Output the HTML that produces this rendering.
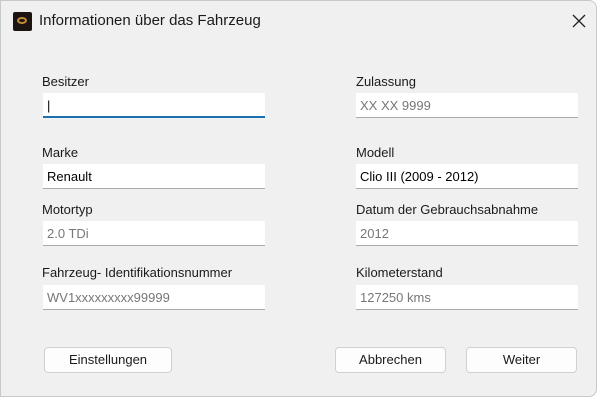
<!DOCTYPE html>
<html><head><style>
body{margin:0;width:600px;height:400px;background:#fff;overflow:hidden;font-family:"Liberation Sans",sans-serif;}
.win{position:absolute;left:0;top:0;width:597px;height:397px;background:#f0f0f0;border:1px solid #c8c8c8;border-radius:0 8px 8px 0;box-sizing:border-box;}
.t{position:absolute;left:38px;top:11px;font-size:15px;color:#1a1a1a;}
.ic{position:absolute;left:12px;top:11px;width:19px;height:19px;background:#1b1410;border-radius:2px;}
.ic:after{content:"";position:absolute;left:4px;top:5px;width:10px;height:7px;border:2px solid #c08a3a;border-radius:50%;box-sizing:border-box;}
.l{position:absolute;font-size:13px;color:#1a1a1a;}
.f{position:absolute;height:25px;background:#fff;border-bottom:1px solid #aaa;box-sizing:border-box;font-size:13px;color:#777;padding:5px 0 0 4px;}
.b{position:absolute;height:26px;background:#fdfdfd;border:1px solid #d0d0d0;border-radius:4px;box-sizing:border-box;font-size:13px;color:#1a1a1a;text-align:center;line-height:24px;}
</style></head><body>
<div class="win">
<div class="ic"></div>
<div class="t">Informationen über das Fahrzeug</div>
<svg style="position:absolute;left:571px;top:13px" width="14" height="14"><path d="M1 1L13 13M13 1L1 13" stroke="#222" stroke-width="1.3"/></svg>

<div class="l" style="left:41px;top:73px">Besitzer</div>
<div class="f" style="left:42px;top:92px;width:222px;border-bottom:2px solid #1a6fb0;color:#000">|</div>
<div class="l" style="left:355px;top:73px">Zulassung</div>
<div class="f" style="left:355px;top:92px;width:222px">XX XX 9999</div>

<div class="l" style="left:41px;top:144px">Marke</div>
<div class="f" style="left:42px;top:163px;width:222px;color:#000">Renault</div>
<div class="l" style="left:355px;top:144px">Modell</div>
<div class="f" style="left:355px;top:163px;width:222px;color:#000">Clio III (2009 - 2012)</div>

<div class="l" style="left:41px;top:201px">Motortyp</div>
<div class="f" style="left:42px;top:220px;width:222px">2.0 TDi</div>
<div class="l" style="left:355px;top:201px">Datum der Gebrauchsabnahme</div>
<div class="f" style="left:355px;top:220px;width:222px">2012</div>

<div class="l" style="left:41px;top:264px">Fahrzeug- Identifikationsnummer</div>
<div class="f" style="left:42px;top:284px;width:222px">WV1xxxxxxxxx99999</div>
<div class="l" style="left:355px;top:264px">Kilometerstand</div>
<div class="f" style="left:355px;top:284px;width:222px">127250 kms</div>

<div class="b" style="left:43px;top:346px;width:128px">Einstellungen</div>
<div class="b" style="left:334px;top:346px;width:111px">Abbrechen</div>
<div class="b" style="left:465px;top:346px;width:111px">Weiter</div>
</div>
</body></html>
